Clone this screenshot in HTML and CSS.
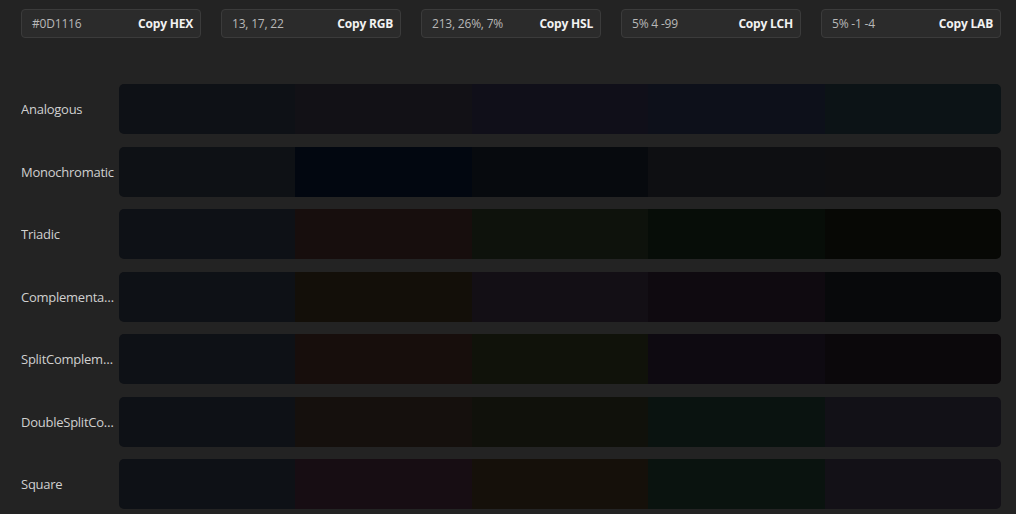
FILE: index.html
```html
<!DOCTYPE html>
<html>
<head>
<meta charset="utf-8">
<link rel="stylesheet" href="styles.css">
</head>
<body>
<div class="page">
  <div class="formats">
    <div class="fmt"><span class="val">#0D1116</span><span class="copy">Copy HEX</span></div>
    <div class="fmt"><span class="val">13, 17, 22</span><span class="copy">Copy RGB</span></div>
    <div class="fmt"><span class="val">213, 26%, 7%</span><span class="copy">Copy HSL</span></div>
    <div class="fmt"><span class="val">5% 4 -99</span><span class="copy">Copy LCH</span></div>
    <div class="fmt"><span class="val">5% -1 -4</span><span class="copy">Copy LAB</span></div>
  </div>
  <div class="schemes">
    <div class="row">
      <div class="label">Analogous</div>
      <div class="bar">
        <div class="sw" style="background:#0e1116"></div>
        <div class="sw" style="background:#121116"></div>
        <div class="sw" style="background:#100f19"></div>
        <div class="sw" style="background:#0d101a"></div>
        <div class="sw" style="background:#0c1316"></div>
      </div>
    </div>
    <div class="row">
      <div class="label">Monochromatic</div>
      <div class="bar">
        <div class="sw" style="background:#0e1115"></div>
        <div class="sw" style="background:#020710"></div>
        <div class="sw" style="background:#070a0e"></div>
        <div class="sw" style="background:#0e0f12"></div>
        <div class="sw" style="background:#0f0f11"></div>
      </div>
    </div>
    <div class="row">
      <div class="label">Triadic</div>
      <div class="bar">
        <div class="sw" style="background:#0e1116"></div>
        <div class="sw" style="background:#170e0d"></div>
        <div class="sw" style="background:#0e120c"></div>
        <div class="sw" style="background:#070d08"></div>
        <div class="sw" style="background:#070805"></div>
      </div>
    </div>
    <div class="row">
      <div class="label">Complementary</div>
      <div class="bar">
        <div class="sw" style="background:#0e1116"></div>
        <div class="sw" style="background:#130f09"></div>
        <div class="sw" style="background:#130f15"></div>
        <div class="sw" style="background:#0f0a10"></div>
        <div class="sw" style="background:#08090b"></div>
      </div>
    </div>
    <div class="row">
      <div class="label">SplitComplementary</div>
      <div class="bar">
        <div class="sw" style="background:#0e1116"></div>
        <div class="sw" style="background:#170e0c"></div>
        <div class="sw" style="background:#10120a"></div>
        <div class="sw" style="background:#0e0a11"></div>
        <div class="sw" style="background:#0b080b"></div>
      </div>
    </div>
    <div class="row">
      <div class="label">DoubleSplitComplementary</div>
      <div class="bar">
        <div class="sw" style="background:#0e1116"></div>
        <div class="sw" style="background:#15100d"></div>
        <div class="sw" style="background:#10110b"></div>
        <div class="sw" style="background:#0a1310"></div>
        <div class="sw" style="background:#121117"></div>
      </div>
    </div>
    <div class="row">
      <div class="label">Square</div>
      <div class="bar">
        <div class="sw" style="background:#0e1116"></div>
        <div class="sw" style="background:#170d13"></div>
        <div class="sw" style="background:#15100a"></div>
        <div class="sw" style="background:#0a130f"></div>
        <div class="sw" style="background:#131117"></div>
      </div>
    </div>
  </div>
</div>
</body>
</html>
```
FILE: styles.css
```css
html, body {
  margin: 0;
  padding: 0;
  background: #232323;
  height: 100%;
  overflow: hidden;
}
.page {
  padding: 9px 15px 0 21px;
  font-family: "Open Sans", "Noto Sans", sans-serif;
  color: #e0e0e0;
}
.formats {
  display: grid;
  grid-template-columns: repeat(5, 1fr);
  column-gap: 20px;
}
.fmt {
  height: 29px;
  box-sizing: border-box;
  background: #2b2b2b;
  border: 1px solid #3b3b3b;
  border-radius: 4px;
  display: flex;
  align-items: center;
  justify-content: space-between;
  padding: 0 7px 0 10px;
  font-size: 12px;
}
.val {
  color: #b8b8b8;
  letter-spacing: -0.2px;
}
.copy {
  color: #f2f2f2;
  font-weight: 700;
  letter-spacing: -0.2px;
}
.schemes {
  margin-top: 46px;
  display: flex;
  flex-direction: column;
  gap: 12.5px;
}
.row {
  display: flex;
  align-items: center;
  height: 50px;
}
.label {
  width: 94px;
  margin-right: 4px;
  flex: none;
  font-size: 13px;
  color: #d0d0d0;
  white-space: nowrap;
  overflow: hidden;
  text-overflow: ellipsis;
  letter-spacing: -0.25px;
}
.bar {
  flex: 1;
  height: 50px;
  display: flex;
  border-radius: 5px;
  overflow: hidden;
}
.sw {
  flex: 1;
}
```
